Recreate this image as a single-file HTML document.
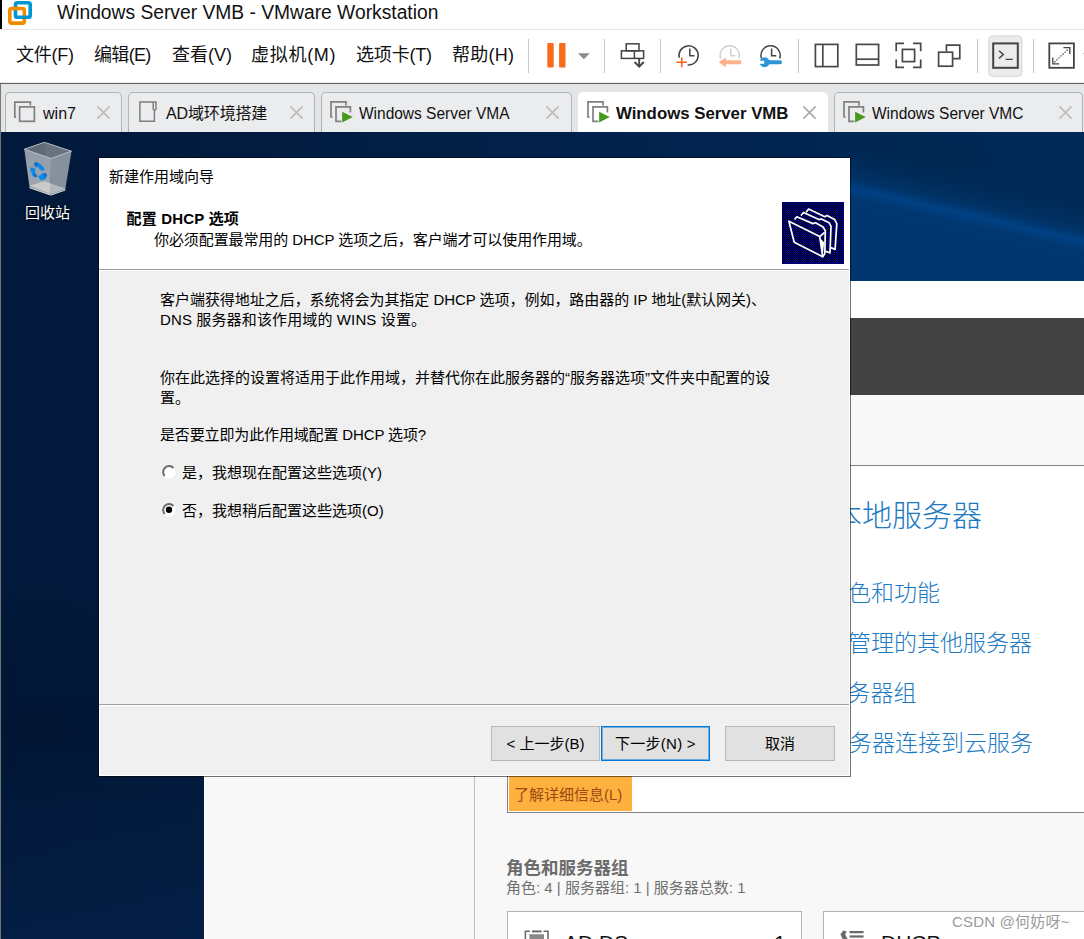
<!DOCTYPE html>
<html lang="zh-CN">
<head>
<meta charset="utf-8">
<title>Windows Server VMB - VMware Workstation</title>
<style>
*{box-sizing:border-box;margin:0;padding:0}
html,body{width:1084px;height:939px;overflow:hidden;background:#fff}
body{position:relative;font-family:"Liberation Sans","Noto Sans CJK SC",sans-serif;color:#000}
.abs{position:absolute}
.t{position:absolute;white-space:nowrap;line-height:1}
/* ---------- VMware chrome ---------- */
#titlebar{left:0;top:0;width:1084px;height:29px;background:#fff}
#blk{left:0;top:0;width:2px;height:29px;background:#000}
#menubar{left:0;top:29px;width:1084px;height:54px;background:#fff;border-top:1px solid #e6e6e6}
#menuline{left:0;top:82px;width:1084px;height:2px;background:linear-gradient(#ececec 0,#ececec 50%,#616161 50%,#616161 100%)}
#tabstrip{left:0;top:84px;width:1084px;height:48px;background:#e4e5e7}
.tab{position:absolute;top:92px;height:41px;background:#ebecee;border:1px solid #b2b3b5;border-bottom:none;border-radius:5px 5px 0 0}
.tab.act{background:#fff;border-color:#fff}
.sep{position:absolute;top:39px;width:1px;height:34px;background:#c8c8c8}
/* ---------- guest desktop ---------- */
#desk{left:1px;top:132px;width:1083px;height:807px;background:#051c3f;overflow:hidden}
/* ---------- server manager ---------- */
#sm{left:204px;top:281px;width:880px;height:658px;background:#fff}
/* ---------- dialog ---------- */
#dlg{left:98px;top:157px;width:753px;height:620px;background:#f0f0f0;border:1px solid rgba(0,0,0,.55);background-clip:padding-box;box-shadow:inset 0 0 0 1px #fff}
#dlghead{left:0;top:0;width:751px;height:111px;background:#fff}

.m{top:42.5px;font-size:18px;line-height:24px;color:#111}
.tb{top:102.8px;font-size:16px;line-height:22px;color:#111}

#desk{background:linear-gradient(90deg,#02193b 0,#021b3e 200px,#02214a 560px,#002a58 1083px)}


.lk{font-size:23px;line-height:30px;font-weight:300;color:#1c7ac3}
.tile{font-size:21px;line-height:24px;color:#111}

.d{font-size:15px;line-height:20px}
.radio{position:absolute;width:13px;height:13px;border-radius:50%;background:#fff;border:1px solid #8a8a8a;border-right-color:#dcdcdc;border-bottom-color:#dcdcdc}
.radio i{position:absolute;left:3px;top:3px;width:5px;height:5px;border-radius:50%;background:#000}
.btn{position:absolute;background:#e1e1e1;border:1px solid #b7b7b7;font-size:15px;line-height:33px;text-align:center;white-space:nowrap}
.btn.def{border:1px solid #0078d7;box-shadow:inset 0 0 0 1px rgba(0,120,215,.5);letter-spacing:.25px}
</style>
</head>
<body>
<div id="titlebar" class="abs"></div>
<div id="blk" class="abs"></div>
<div id="menubar" class="abs"></div>
<div id="menuline" class="abs"></div>
<div id="tabstrip" class="abs"></div>

<!-- ===== VMware title bar ===== -->
<svg class="abs" style="left:6px;top:0" width="30" height="28" viewBox="0 0 30 28" fill="none" stroke-width="3.6">
  <rect x="3.8" y="8.55" width="14.5" height="14.55" rx="1.8" stroke="#f38b00"/>
  <rect x="9.5" y="2.8" width="14.7" height="14.5" rx="1.8" stroke="#0095d3"/>
  <path d="M7.2 8.55H12.2" stroke="#f38b00"/>
</svg>
<div class="t" id="ttl" style="left:57.0px;top:0.6px;font-size:19.6px;line-height:22px;color:#111;transform:scaleX(0.9820);transform-origin:0 0">Windows Server VMB - VMware Workstation</div>

<!-- ===== menu ===== -->
<div id="m1" class="t m" style="left:16px;letter-spacing:-0.23px">文件(F)</div>
<div id="m2" class="t m" style="left:94px;letter-spacing:-0.68px">编辑(E)</div>
<div id="m3" class="t m" style="left:172px">查看(V)</div>
<div id="m4" class="t m" style="left:251px;letter-spacing:0.72px">虚拟机(M)</div>
<div id="m5" class="t m" style="left:356px;letter-spacing:-0.18px">选项卡(T)</div>
<div id="m6" class="t m" style="left:452px;letter-spacing:0.23px">帮助(H)</div>

<!-- ===== toolbar ===== -->
<svg class="abs" style="left:520px;top:30px" width="564" height="52" viewBox="520 30 564 52" fill="none" stroke-linecap="butt">
  <g stroke="#c6c6c6" stroke-width="1">
    <path d="M528.5 39V73M604.5 39V73M660.5 39V73M798.5 39V73M977.5 39V73M1033.5 39V73"/>
  </g>
  <!-- pause -->
  <rect x="547.3" y="43" width="6.4" height="24.4" rx="1" fill="#f96a1b"/>
  <rect x="559.1" y="43" width="6.4" height="24.4" rx="1" fill="#f96a1b"/>
  <path d="M578 53.2H589.8L583.9 59.2Z" fill="#8c8c8c"/>
  <!-- send ctrl-alt-del -->
  <g stroke="#444" stroke-width="1.5">
    <rect x="626.2" y="43.8" width="12.8" height="7"/>
    <rect x="621.4" y="50.8" width="22.2" height="7.6"/>
    <path d="M634.4 50.8V58.4"/><path d="M639.2 58.4V66.4M634.6 62L639.2 66.6L643.8 62" stroke-width="1.9"/>
  </g>
  <!-- snapshot take -->
  <g stroke="#444" stroke-width="1.5">
    <path d="M679.3 57.8A9.6 9.6 0 1 1 687.6 64.95"/>
    <path d="M689.8 48.6V55.8H694.4"/>
  </g>
  <path d="M676.4 62.3H687M681.7 57.4V67.2" stroke="#f0641e" stroke-width="1.6"/>
  <!-- snapshot revert -->
  <g stroke="#cfcfcf" stroke-width="1.4">
    <path d="M720.65 58.6A9.6 9.6 0 1 1 738.75 58.6"/>
    <path d="M730.7 48.6V55.8H735.4"/>
  </g>
  <path d="M718.6 62.3L726 57.4V60.3H741.2V64.3H726V67.2Z" fill="#fcb18c"/>
  <!-- snapshot manager -->
  <g stroke="#444" stroke-width="1.5">
    <path d="M761.55 58.6A9.6 9.6 0 1 1 779.65 58.6"/>
    <path d="M771.6 48.6V55.8H776.2"/>
  </g>
  <path d="M766 62.3H780" stroke="#2b95d6" stroke-width="4" stroke-linecap="round"/>
  <circle cx="764.6" cy="62.3" r="5" fill="#2b95d6"/>
  <rect x="758.6" y="60.8" width="5.6" height="3" fill="#fff"/>
  <!-- layout icons -->
  <g stroke="#484848" stroke-width="1.7">
    <rect x="815.4" y="44.4" width="22.4" height="22.2"/>
    <path d="M822.8 44.4V66.6"/>
    <rect x="856.3" y="44.4" width="22.3" height="20.6"/>
    <path d="M856.3 59.2H878.6"/>
    <path d="M896.2 51.2V43.3H904M913 43.3H920.7V51.2M920.7 59.6V67.3H913M904 67.3H896.2V59.6"/>
    <rect x="902.4" y="49.4" width="12.2" height="12.2"/>
    <path d="M946.4 51.6V45.2H959.8V58.6H953.2"/>
    <rect x="938.6" y="52.2" width="14" height="14"/>
  </g>
  <!-- console button -->
  <rect x="988.8" y="36" width="33" height="40.2" rx="3.5" fill="#ebecee" stroke="#d2d2d2" stroke-width="1"/>
  <g stroke="#444">
    <rect x="993.2" y="43.4" width="24.6" height="24.4" stroke-width="2"/>
    <path d="M999 50.8L1003.4 54.6L999 58.4M1005.6 59.4H1012.8" stroke-width="1.4"/>
  </g>
  <!-- stretch -->
  <g stroke="#444">
    <rect x="1049.3" y="43.4" width="24.6" height="24.4" stroke-width="1.8"/>
    <path d="M1063.4 47.6H1069.8V54M1052.8 57.4V63.8H1059.2" stroke-width="1.3"/>
    <path d="M1054.4 62.2L1068.4 49" stroke-width="1.2" stroke-dasharray="1.4 1.4"/>
  </g>
  <path d="M1083 53.4H1084V54.6Z" fill="#888"/>
</svg>

<!-- ===== tabs ===== -->
<div class="tab" style="left:5px;width:117px"></div>
<div class="tab" style="left:128px;width:187px"></div>
<div class="tab" style="left:321px;width:251px"></div>
<div class="tab act" style="left:578px;width:250px"></div>
<div class="tab" style="left:834px;width:249px"></div>
<svg class="abs" style="left:0;top:92px" width="1084" height="40" viewBox="0 92 1084 40" fill="none">
  <!-- win7 icon -->
  <g stroke="#808080" stroke-width="1.7">
    <path d="M16.2 117.2H14.8V102.2H30.4V105.6"/>
    <rect x="19.6" y="106.9" width="14.8" height="14.4"/>
  </g>
  <!-- doc icon -->
  <g stroke="#6e6e6e" stroke-width="1.3">
    <path d="M139.9 101.9H156V109.2L154.6 110.4L153.2 109.2V101.9M154.4 110.4V121.2H139.9V101.9" stroke="#7e7e7e" stroke-width="1.5" stroke-linecap="square"/>
  </g>
  <!-- vm running icons -->
  <g>
    <path d="M332.6 117H331V101.9H346V105.4" stroke="#808080" stroke-width="1.7"/>
    <path d="M350.4 112.4V106.9H336V121.4H341.4" stroke="#808080" stroke-width="1.7"/>
    <path d="M342.1 111.7L352.8 117.1L342.1 122.4Z" fill="#47991c"/>
  </g>
  <g transform="translate(257 0)">
    <path d="M332.6 117H331V101.9H346V105.4" stroke="#808080" stroke-width="1.7"/>
    <path d="M350.4 112.4V106.9H336V121.4H341.4" stroke="#808080" stroke-width="1.7"/>
    <path d="M342.1 111.7L352.8 117.1L342.1 122.4Z" fill="#47991c"/>
  </g>
  <g transform="translate(513 0)">
    <path d="M332.6 117H331V101.9H346V105.4" stroke="#808080" stroke-width="1.7"/>
    <path d="M350.4 112.4V106.9H336V121.4H341.4" stroke="#808080" stroke-width="1.7"/>
    <path d="M342.1 111.7L352.8 117.1L342.1 122.4Z" fill="#47991c"/>
  </g>
      <!-- close X -->
  <g stroke="#bdbdbd" stroke-width="1.6">
    <path d="M97.4 106.4L109.6 118.6M109.6 106.4L97.4 118.6"/>
    <path d="M290.4 106.4L302.6 118.6M302.6 106.4L290.4 118.6"/>
    <path d="M546.4 106.4L558.6 118.6M558.6 106.4L546.4 118.6"/>
    <path d="M1059.4 106.4L1071.6 118.6M1071.6 106.4L1059.4 118.6"/>
  </g>
  <path d="M803.4 106.4L815.6 118.6M815.6 106.4L803.4 118.6" stroke="#a8a8a8" stroke-width="1.6"/>
</svg>
<div id="tb1" class="t tb" style="left:43px;transform:scaleX(1.0037);transform-origin:0 0">win7</div>
<div id="tb2" class="t tb" style="left:166px;letter-spacing:-0.15px">AD域环境搭建</div>
<div id="tb3" class="t tb" style="left:359px;transform:scaleX(0.9673);transform-origin:0 0">Windows Server VMA</div>
<div id="tb4" class="t tb" style="left:616px;font-weight:bold;transform:scaleX(1.0495);transform-origin:0 0">Windows Server VMB</div>
<div id="tb5" class="t tb" style="left:872px;transform:scaleX(0.9673);transform-origin:0 0">Windows Server VMC</div>
<div class="abs" style="left:0;top:84px;width:1px;height:48px;background:#7a7a7a"></div>

<div id="desk" class="abs">
  <div class="abs" style="left:0;top:0;width:203px;height:807px;background:linear-gradient(180deg,rgba(0,0,0,0) 0,rgba(0,0,0,0) 55%,rgba(0,0,10,.14) 74%,rgba(0,0,0,0) 84%,rgba(20,70,140,.10) 100%)"></div>
  <svg class="abs" style="left:838px;top:0" width="245" height="149" viewBox="839 132 245 149">
    <defs><linearGradient id="bm" gradientUnits="userSpaceOnUse" x1="982.6" y1="146.45" x2="960.3" y2="243.95">
      <stop offset="0" stop-color="#00264f" stop-opacity="0"/>
      <stop offset="0.35" stop-color="#002a56" stop-opacity=".5"/>
      <stop offset="0.6" stop-color="#003468" stop-opacity=".9"/>
      <stop offset="0.7" stop-color="#004184"/>
      <stop offset="0.8" stop-color="#003770"/>
      <stop offset="1" stop-color="#00366e"/>
    </linearGradient></defs>
    <rect x="839" y="132" width="245" height="149" fill="url(#bm)"/>
  </svg>
</div>
<div class="abs" style="left:0;top:132px;width:1px;height:807px;background:#6f7378"></div>
<!-- recycle bin -->
<svg class="abs" style="left:20px;top:138px" width="56" height="62" viewBox="20 138 56 62">
  <defs>
    <linearGradient id="rbL" x1="0" y1="0" x2="0" y2="1"><stop offset="0" stop-color="#919ca9"/><stop offset="1" stop-color="#a1a9b3"/></linearGradient>
    <linearGradient id="rbT" x1="0" y1="0" x2="1" y2="0"><stop offset="0" stop-color="#5f6a76"/><stop offset=".42" stop-color="#5f6a76"/><stop offset=".46" stop-color="#687380"/><stop offset="1" stop-color="#687380"/></linearGradient>
  </defs>
  <path d="M24.3 149.2L44.4 142.3L71.5 151.2L51 158.5Z" fill="url(#rbT)"/>
  <path d="M24.3 149.2L51 158.5L50.7 195.1L29.6 187.8Z" fill="url(#rbL)"/>
  <path d="M51 158.5L71.5 151.2L65.2 190.1L50.7 195.1Z" fill="#85919d"/>
  <path d="M30.2 185.5L44.4 181.2L50.8 183.4L50.7 194.1Z" fill="#c9caca"/>
  <path d="M50.8 183.4L65.5 188.8L50.7 194.1Z" fill="#b4b9bd"/>
  <path d="M29.6 187.8L50.7 195.1L65.2 190.1" fill="none" stroke="#d8d6d2" stroke-width="1"/>
  <path d="M24.3 149.2L44.4 142.3L71.5 151.2L51 158.5Z" fill="none" stroke="#c3cbd3" stroke-width="0.9"/>
  <g fill="#0d8ae6">
    <path d="M33.8 164.4L35.5 162.1L39.8 163.4L44.7 168.4L43.1 171.3L39.1 169L37.8 166.4L36.5 167.4Z"/>
    <path d="M30.2 167.4L34.5 167.7L35.8 171.7L34.2 172.3L36.8 175L36.5 177.6L33.2 176.3L30.5 171Z"/>
    <path d="M38.1 176.3L42.4 173.6L45.7 173L47 175.6L45.1 179.3L41.4 180.6L39.1 178.3Z"/>
  </g>
  <g fill="#0a6fd2">
    <path d="M33.8 164.4L35.5 162.1L38.2 163L36.5 167.4Z"/>
    <path d="M34.2 172.3L36.8 175L36.5 177.6L33.2 176.3Z"/>
    <path d="M43 173.4L45.7 173L47 175.6L45.4 178.4Z"/>
  </g>
</svg>
<div class="t" id="rbtxt" style="left:25px;top:203px;font-size:15px;line-height:20px;color:#fff;text-shadow:0 1px 2px rgba(0,0,0,.9),0 0 2px rgba(0,0,0,.6)">回收站</div>


<div id="sm" class="abs">
  <div class="abs" style="left:0;top:37px;width:880px;height:77px;background:#424242"></div>
  <div class="abs" style="left:0;top:114px;width:880px;height:544px;background:#f8f8f8"></div>
  <!-- left nav pane -->
  <div class="abs" style="left:0;top:114px;width:270px;height:544px;background:#f8f8f8;border-left:1px solid #fff"></div>
  <div class="abs" style="left:270px;top:113px;width:1px;height:545px;background:#bdbdbd"></div>
  <!-- welcome tile box -->
  <div class="abs" style="left:303px;top:184px;width:600px;height:348px;border:1px solid #828282;background:#fff"></div>
  <div class="abs" style="left:305px;top:495px;width:123px;height:35px;background:#feb13f"></div>
  <!-- role tiles -->
  <div class="abs" style="left:303px;top:630px;width:295px;height:40px;background:#fff;border:1px solid #b4b4b4"></div>
  <div class="abs" style="left:619px;top:630px;width:295px;height:40px;background:#fff;border:1px solid #b4b4b4"></div>
</div>
<div id="lk1" class="t lk" style="left:832px;top:496px;font-size:30px;line-height:40px">本地服务器</div>
<div id="lk2" class="t lk" style="left:848px;top:578px">色和功能</div>
<div id="lk3" class="t lk" style="left:848px;top:628px">管理的其他服务器</div>
<div id="lk4" class="t lk" style="left:847.5px;top:678px">务器组</div>
<div id="lk5" class="t lk" style="left:849px;top:728px">务器连接到云服务</div>
<div class="t" id="more" style="left:514px;top:785px;font-size:15px;line-height:20px;color:#9c4a14">了解详细信息(L)</div>
<div class="t" id="rg1" style="left:506px;top:856px;font-size:17.5px;line-height:24px;font-weight:bold;color:#6b6b6b">角色和服务器组</div>
<div class="t" id="rg2" style="left:506px;top:878px;font-size:15px;line-height:20px;color:#707070">角色: 4 | 服务器组: 1 | 服务器总数: 1</div>
<div id="tile1" class="t tile" style="left:564px;top:930.5px">AD DS</div>
<div id="tile2" class="t tile" style="left:774px;top:930.5px">1</div>
<div id="tile3" class="t tile" style="left:881px;top:931px">DHCP</div>
<svg class="abs" style="left:520px;top:926px" width="360" height="13" viewBox="520 926 360 13">
  <g fill="#6a6a6a">
    <path d="M524.6 930.4H530V932H526.2V939H524.6ZM543.4 930.4H548.8V939H547.2V932H543.4Z"/>
    <rect x="532" y="930.4" width="9.6" height="2"/>
    <rect x="529.4" y="934.2" width="14.6" height="4.8" fill="#8a8a8a"/>
    <rect x="849.6" y="931" width="14" height="2.2"/>
    <rect x="849.6" y="935.4" width="14" height="2.2"/>
    <path d="M840.4 934.2L843.4 930.4L846.6 931.4L845.2 934.4L847.6 939H842.6Z"/>
  </g>
</svg>
<div class="t" id="wm" style="left:952px;top:912px;font-size:15px;line-height:20px;color:#9b9b9b;letter-spacing:0.2px;font-family:'Liberation Sans','Noto Sans CJK SC',sans-serif">CSDN @何妨呀~</div>


<div id="dlg" class="abs">
  <div id="dlghead" class="abs"></div>
  <div class="abs" style="left:0;top:111px;width:750px;height:1px;background:#a0a0a0"></div>
  <div class="abs" style="left:0;top:112px;width:750px;height:1px;background:#fff"></div>
  <div class="abs" style="left:0;top:546px;width:750px;height:1px;background:#a0a0a0"></div>
  <div class="abs" style="left:0;top:547px;width:750px;height:1px;background:#fff"></div>
  <!-- wizard icon -->
  <svg class="abs" style="left:683px;top:44px" width="62" height="62" viewBox="0 0 62 62">
    <defs>
      <pattern id="dith" width="2" height="2" patternUnits="userSpaceOnUse">
        <rect width="2" height="2" fill="#000"/>
        <rect x="0" y="0" width="1" height="1" fill="#0000d8"/>
        <rect x="1" y="1" width="1" height="1" fill="#000070"/>
      </pattern>
    </defs>
    <rect width="62" height="62" fill="#00007a"/>
    <rect x="1" y="1" width="60" height="60" fill="url(#dith)"/>
    <g fill="none" stroke="#fff" stroke-width="1.7" stroke-linejoin="round" stroke-linecap="round">
      <path d="M24.5 9.6L26.6 7.1L42.8 14.7L45 13.5L52.6 17.6L54.8 21.6L53.1 47.4L48.8 45.6"/>
      <path d="M19.4 13L21.6 10.5L36.9 17.6L39.4 16.9L47.1 20.7L49 24.2L48 50.9L43.4 49.2"/>
      <path d="M13 16.9L14.8 14.8L30.9 21.6L33.5 20.7L41.1 25L43.3 28.8L42.8 51.8L40.7 54.7"/>
      <path d="M6.9 19.2L37.7 34.6L40.7 54.7L12.2 40.2Z"/>
      <path d="M37.7 34.6L42 31"/>
    </g>
    <path d="M37.9 36L42.2 40.5L40.7 54.4Z" fill="#fff"/>
  </svg>
  <div class="t" id="d0" style="left:10px;top:9px;font-size:15px;line-height:20px">新建作用域向导</div>
  <div class="t" id="d1" style="left:27.5px;top:51px;font-size:15px;line-height:20px;font-weight:bold;letter-spacing:0.20px">配置 DHCP 选项</div>
  <div class="t d" id="d2" style="left:55px;top:72px;letter-spacing:-0.09px">你必须配置最常用的 DHCP 选项之后，客户端才可以使用作用域。</div>
  <div class="t d" id="d3" style="left:61px;top:131.5px;letter-spacing:-0.04px">客户端获得地址之后，系统将会为其指定 DHCP 选项，例如，路由器的 IP 地址(默认网关)、</div>
  <div class="t d" id="d4" style="left:61px;top:151.5px;letter-spacing:0.13px">DNS 服务器和该作用域的 WINS 设置。</div>
  <div class="t d" id="d5" style="left:61px;top:209.5px">你在此选择的设置将适用于此作用域，并替代你在此服务器的“服务器选项”文件夹中配置的设</div>
  <div class="t d" id="d6" style="left:61px;top:229.5px">置。</div>
  <div class="t d" id="d7" style="left:61px;top:266.5px;letter-spacing:-0.14px">是否要立即为此作用域配置 DHCP 选项?</div>
  <div class="t d" id="d8" style="left:83px;top:304.5px">是，我想现在配置这些选项(Y)</div>
  <div class="t d" id="d9" style="left:83px;top:342.5px">否，我想稍后配置这些选项(O)</div>
  <svg class="abs" style="left:61.7px;top:306.3px" width="16" height="16" viewBox="0 0 16 16">
    <circle cx="8" cy="8" r="6.6" fill="#fff"/>
    <path d="M3.7 12A5.8 5.8 0 0 1 12.4 4" fill="none" stroke="#6a6a6a" stroke-width="2"/>
    
  </svg>
  <svg class="abs" style="left:61.7px;top:343.8px" width="16" height="16" viewBox="0 0 16 16">
    <circle cx="8" cy="8" r="6.6" fill="#fff"/>
    <path d="M3.7 12A5.8 5.8 0 0 1 12.4 4" fill="none" stroke="#6a6a6a" stroke-width="2"/>
    
    <circle cx="8" cy="7.8" r="3.2" fill="#000"/>
  </svg>
  <div class="btn" style="left:392px;top:568px;width:109px;height:35px">&lt; 上一步(B)</div>
  <div class="btn def" style="left:502px;top:568px;width:109px;height:35px">下一步(N) &gt;</div>
  <div class="btn" style="left:626px;top:568px;width:110px;height:35px">取消</div>
</div>

</body>
</html>
